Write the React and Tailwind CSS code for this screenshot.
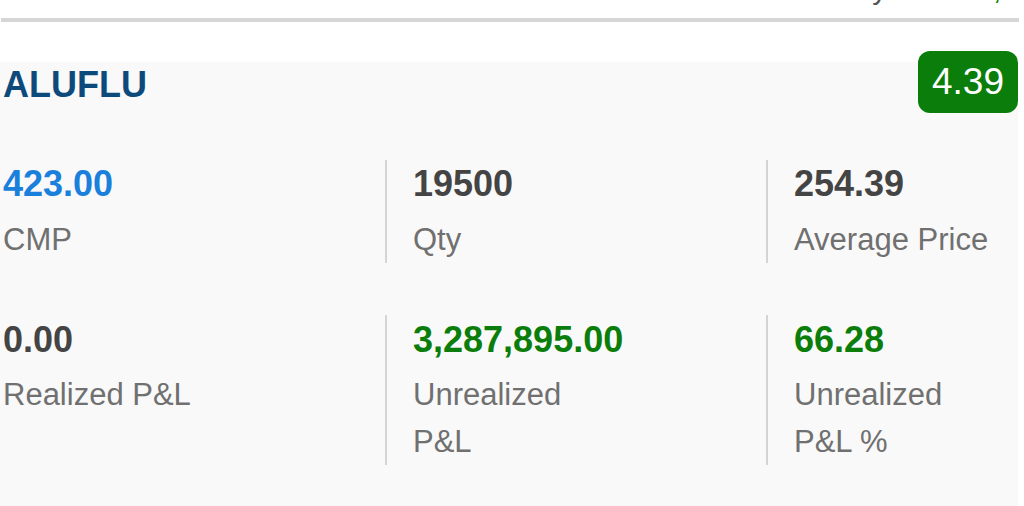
import React from "react";

function Cell({ value, label, valueClass, first, pt, labelMt, labelLeading }) {
  return (
    <div
      className={
        (first ? "" : "border-l-2 border-[#d4d4d4] pl-[26px] ") + pt
      }
    >
      <div className={"text-[36px] font-bold leading-[40px] " + valueClass}>{value}</div>
      <div className={"text-[31px] text-[#707070] " + labelMt + " " + labelLeading}>{label}</div>
    </div>
  );
}

export default function App() {
  return (
    <div className="w-[1024px] h-[506px] bg-white overflow-hidden font-['Liberation_Sans',Arial,sans-serif]">
      <div className="h-[18px] overflow-hidden">
        <div className="flex justify-end pr-[6px] -mt-[28px] text-[30px] leading-[34px]">
          <span className="text-[#555555] mr-[89px]">Today</span>
          <span className="text-[#0a7d0a]">3,2</span>
        </div>
      </div>
      <div className="ml-[1px] w-[1018px] h-[4px] bg-[#d6d6d6]" />
      <div className="mt-[40px] w-[1018px] h-[444px] bg-[#f9f9f9] pl-[3px]">
        <div className="flex justify-between items-start">
          <div className="pt-[3px] text-[36px] font-bold leading-[40px] text-[#0d4a7c]">ALUFLU</div>
          <div className="-mt-[11px] h-[62px] rounded-[12px] bg-[#0a7d0a] px-[14px] text-[37px] leading-[62px] text-white">
            4.39
          </div>
        </div>
        <div className="mt-[47px] grid grid-cols-[382px_381px_1fr]">
          <Cell first value="423.00" label="CMP" valueClass="text-[#1a80dc]" pt="pt-[4px]" labelMt="mt-[13px]" labelLeading="leading-[46px]" />
          <Cell value="19500" label="Qty" valueClass="text-[#444444]" pt="pt-[4px]" labelMt="mt-[13px]" labelLeading="leading-[46px]" />
          <Cell value="254.39" label="Average Price" valueClass="text-[#444444]" pt="pt-[4px]" labelMt="mt-[13px]" labelLeading="leading-[46px]" />
        </div>
        <div className="mt-[52px] grid grid-cols-[382px_381px_1fr]">
          <Cell first value="0.00" label="Realized P&L" valueClass="text-[#444444]" pt="pt-[5px]" labelMt="mt-[11px]" labelLeading="leading-[47px]" />
          <Cell
            value="3,287,895.00"
            label={<>Unrealized<br />P&L</>}
            valueClass="text-[#0a7d0a]"
            pt="pt-[5px]"
            labelMt="mt-[11px]"
            labelLeading="leading-[47px]"
          />
          <Cell
            value="66.28"
            label={<>Unrealized<br />P&L %</>}
            valueClass="text-[#0a7d0a]"
            pt="pt-[5px]"
            labelMt="mt-[11px]"
            labelLeading="leading-[47px]"
          />
        </div>
      </div>
    </div>
  );
}
